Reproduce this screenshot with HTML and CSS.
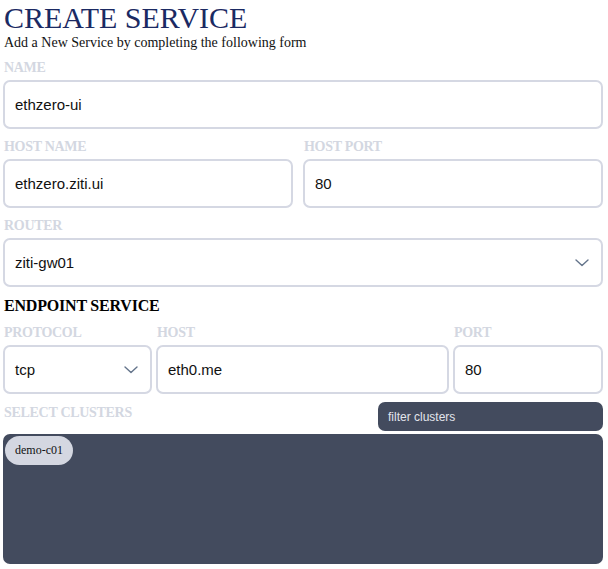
FILE: index.html
```html
<!DOCTYPE html>
<html lang="en">
<head>
<meta charset="utf-8">
<title>Create Service</title>
<link rel="stylesheet" href="styles.css">
</head>
<body>
<main class="page">
  <h1 class="title">CREATE SERVICE</h1>
  <p class="subtitle">Add a New Service by completing the following form</p>

  <div class="field field-first">
    <label class="label">NAME</label>
    <div class="input">ethzero-ui</div>
  </div>

  <div class="row row-two">
    <div class="field">
      <label class="label">HOST NAME</label>
      <div class="input">ethzero.ziti.ui</div>
    </div>
    <div class="field">
      <label class="label">HOST PORT</label>
      <div class="input">80</div>
    </div>
  </div>

  <div class="field">
    <label class="label">ROUTER</label>
    <div class="input select">
      <span>ziti-gw01</span>
      <svg class="chev" width="14" height="8" viewBox="0 0 14 8"><path d="M1 1l6 5.5L13 1" fill="none" stroke="#64748b" stroke-width="1.4" stroke-linecap="round" stroke-linejoin="round"/></svg>
    </div>
  </div>

  <h2 class="section">ENDPOINT SERVICE</h2>

  <div class="row row-three">
    <div class="field">
      <label class="label">PROTOCOL</label>
      <div class="input select">
        <span>tcp</span>
        <svg class="chev" width="14" height="8" viewBox="0 0 14 8"><path d="M1 1l6 5.5L13 1" fill="none" stroke="#64748b" stroke-width="1.4" stroke-linecap="round" stroke-linejoin="round"/></svg>
      </div>
    </div>
    <div class="field">
      <label class="label">HOST</label>
      <div class="input">eth0.me</div>
    </div>
    <div class="field">
      <label class="label">PORT</label>
      <div class="input">80</div>
    </div>
  </div>

  <div class="clusters-head">
    <label class="label label-inline">SELECT CLUSTERS</label>
    <div class="filter">filter clusters</div>
  </div>
  <div class="clusters-box">
    <span class="chip">demo-c01</span>
  </div>
</main>
</body>
</html>
```

FILE: styles.css
```css
* { box-sizing: border-box; }

html, body {
  margin: 0;
  padding: 0;
  background: #ffffff;
}

body {
  font-family: "Liberation Serif", "Times New Roman", serif;
}

.page {
  padding: 0 5px 0 3px;
  display: flex;
  flex-direction: column;
}

.title {
  margin: 0 0 0 1px;
  font-family: "Liberation Serif", serif;
  font-weight: normal;
  font-size: 30px;
  line-height: 35px;
  color: #1b2a63;
}

.subtitle {
  margin: 0 0 0 1px;
  font-size: 14px;
  line-height: 16px;
  color: #111111;
}

.field {
  display: flex;
  flex-direction: column;
  margin-top: 10px;
  min-width: 0;
}

.field-first { margin-top: 9px; }

.label {
  display: block;
  margin: 0 0 4px 1px;
  font-family: "Liberation Serif", serif;
  font-weight: bold;
  font-size: 14px;
  line-height: 16px;
  letter-spacing: -0.3px;
  color: #d3d7e1;
}

.input {
  height: 49px;
  border: 2px solid #d5d8e3;
  border-radius: 7px;
  padding: 0 10px;
  display: flex;
  align-items: center;
  font-family: "Liberation Sans", Arial, sans-serif;
  font-size: 15px;
  color: #111111;
  background: #ffffff;
}

.select {
  justify-content: space-between;
  padding-right: 12px;
}

.chev { display: block; }

.row { display: grid; }
.row-two { grid-template-columns: 290px 1fr; column-gap: 10px; }
.row-three { grid-template-columns: 149px 1fr 150px; column-gap: 4px; }

.section {
  margin: 10px 0 0 1px;
  font-family: "Liberation Serif", serif;
  font-weight: bold;
  font-size: 16px;
  line-height: 18px;
  letter-spacing: -0.2px;
  color: #000000;
}

.clusters-head {
  display: flex;
  justify-content: space-between;
  align-items: flex-start;
  margin-top: 8px;
}

.label-inline {
  margin: 3px 0 0 1px;
}

.filter {
  width: 225px;
  height: 29px;
  border-radius: 7px;
  background: #434b5e;
  color: #e2e5ec;
  font-family: "Liberation Sans", Arial, sans-serif;
  font-size: 12px;
  display: flex;
  align-items: center;
  padding-left: 10px;
}

.clusters-box {
  margin-top: 3px;
  height: 130px;
  border-radius: 7px;
  background: #434b5e;
  padding: 2px;
  display: flex;
  align-items: flex-start;
}

.chip {
  height: 29px;
  padding: 0 10px;
  border-radius: 15px;
  background: #d4d7e1;
  color: #111111;
  font-family: "Liberation Serif", serif;
  font-size: 12px;
  display: flex;
  align-items: center;
}
```
